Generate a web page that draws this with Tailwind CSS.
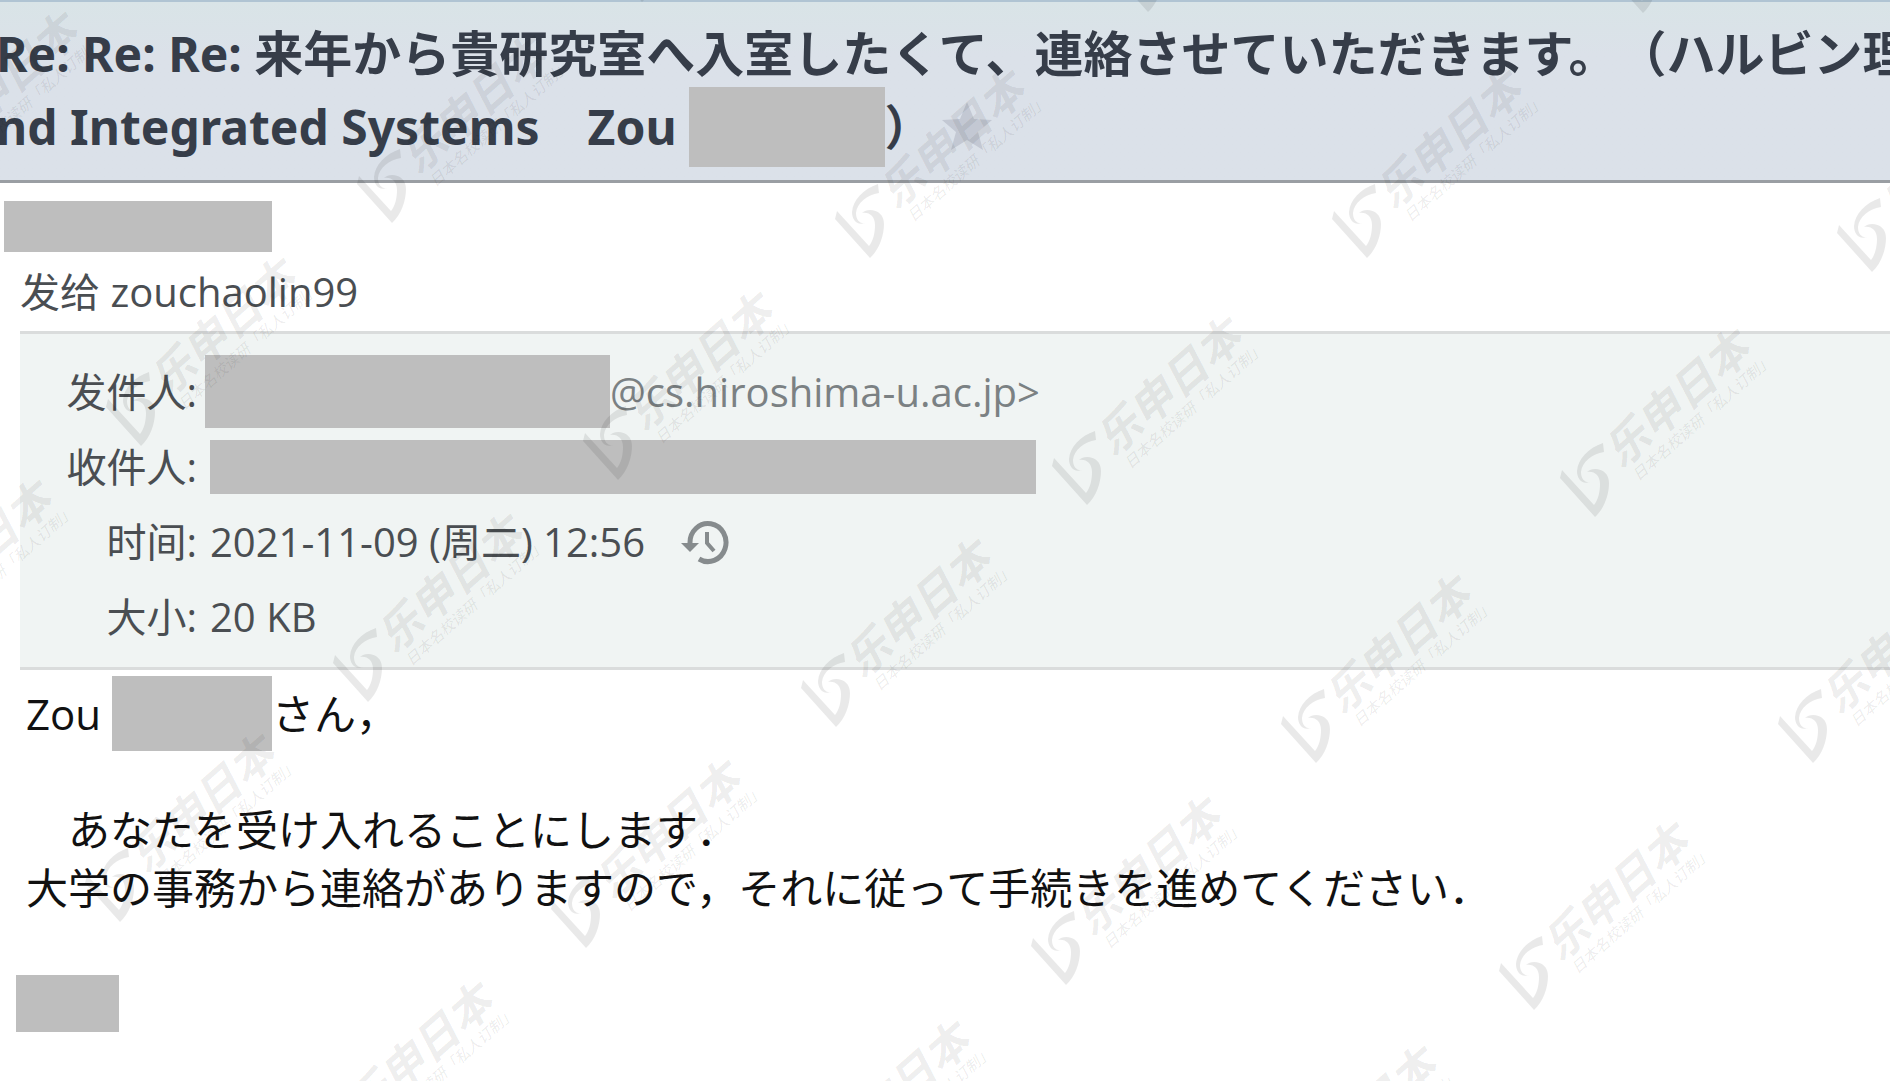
<!DOCTYPE html>
<html lang="ja">
<head>
  <meta charset="UTF-8" />
  <meta name="viewport" content="width=device-width, initial-scale=1.0"/>
  <title>Re: Re: Re: 来年から貴研究室へ入室したくて</title>
  <script src="https://cdn.jsdelivr.net/npm/@tailwindcss/browser@4"></script>
</head>
<body class="relative min-h-screen overflow-hidden bg-white text-[#4a4e52] font-['Open_Sans','Noto_Sans_CJK_SC',sans-serif] [text-spacing-trim:space-all]">

  <!-- Subject -->
  <header class="border-t-2 border-t-[#b0c4d3] border-b-3 border-b-[#9a9ea3] bg-linear-to-b from-[#d9e4e7] to-[#dbe1e9] to-30% pt-[14px] pb-4 overflow-hidden">
    <h1 class="-ml-1 whitespace-nowrap text-[48px] leading-[74px] font-bold text-[#363d49] font-['Noto_Sans','Noto_Sans_CJK_JP',sans-serif]">
      <span class="block h-[74px]">Re: Re: Re: <span class="text-[49px]">来年から貴研究室へ入室したくて、連絡させていただきます。（ハルビン理</span></span>
      <span class="flex h-[74px] items-center">
        <span>nd Integrated Systems　Zou</span>
        <span class="ml-3 h-20 w-[196px] bg-[#bebebe]"></span>
        <span class="w-12">）</span>
        <button type="button" aria-label="星标" class="ml-2">
          <svg class="size-13" viewBox="0 0 52 52" fill="#c3c8d3"><path d="M26 1l7 17 18 1-14 12 5 18-16-10-16 10 5-18L1 19l18-1z"/></svg>
        </button>
      </span>
    </h1>
  </header>

  <!-- Sender -->
  <section class="pt-[18px]">
    <div class="ml-1 h-[51px] w-[268px] bg-[#bebebe]"></div>
    <p class="pt-3 pl-5 text-[40px] leading-[56px]">发给 zouchaolin99</p>
  </section>

  <!-- Message details -->
  <section class="mt-[11px] ml-5 border-y-3 border-[#dadcdc] bg-[#f0f4f3] pt-5 pb-[13px] text-[40px]">
    <dl>
      <div class="flex h-[75px] items-center">
        <dt class="w-[177px] text-right">发件人:</dt>
        <dd class="flex items-center pl-2 text-[#7b8183]">
          <span class="h-[73px] w-[405px] bg-[#bebebe]"></span>@cs.hiroshima-u.ac.jp&gt;
        </dd>
      </div>
      <div class="flex h-[75px] items-center">
        <dt class="w-[177px] text-right">收件人:</dt>
        <dd class="pl-[13px]"><div class="h-[54px] w-[826px] bg-[#bebebe]"></div></dd>
      </div>
      <div class="flex h-[75px] items-center">
        <dt class="w-[177px] text-right">时间:</dt>
        <dd class="flex items-center gap-9 pl-[13px]">
          2021-11-09 (周二) 12:56
          <button type="button" aria-label="历史">
            <svg class="size-12" viewBox="0 0 48 48" fill="none" stroke="#868b8d" stroke-width="5">
              <path d="M9 25A18 19 0 1 1 18 41" />
              <path d="M26 14v11l7 8" stroke-width="4" />
              <path d="M0 25h18l-9 9z" fill="#868b8d" stroke="none" />
            </svg>
          </button>
        </dd>
      </div>
      <div class="flex h-[75px] items-center">
        <dt class="w-[177px] text-right">大小:</dt>
        <dd class="pl-[13px]">20 KB</dd>
      </div>
    </dl>
  </section>

  <!-- Body -->
  <main class="pt-[6px] pl-[26px] text-[42px] leading-[58px] text-[#111] font-['Open_Sans','Noto_Sans_CJK_JP',sans-serif]">
    <p class="flex h-[75px] items-center">
      <span>Zou</span>
      <span class="ml-[11px] h-[75px] w-[160px] bg-[#bebebe]"></span>
      <span>さん，</span>
    </p>
    <p class="pt-[50px] whitespace-nowrap">　あなたを受け入れることにします．<br>大学の事務から連絡がありますので，それに従って手続きを進めてください．</p>
    <div class="mt-[58px] -ml-[10px] h-[57px] w-[103px] bg-[#bebebe]"></div>
  </main>

  <!-- Watermark -->
  <svg class="pointer-events-none absolute top-0 left-0 h-full w-full font-['Noto_Sans_CJK_SC',sans-serif] italic" fill="#000" fill-opacity="0.085" aria-hidden="true">
    <defs>
      <g id="mark">
        <path d="M-33-47l-2 8L0 0C9-8 14-22 14-34C14-43 8-48 0-48C-3-48-6-47-8-45C0-46 5-41 5-33C5-25 3-17-1-12z"/>
        <path d="M8-74l1 9C-3-63-13-55-14-45C-14-38-10-34-5-35C-13-32-18-38-18-46C-17-58-7-69 8-74z"/>
        <g transform="rotate(-41.5)">
          <text x="51" y="-18" font-size="44" font-weight="700">乐申日本</text>
          <text x="56" y="2" font-size="15">日本名校读研「私人订制」</text>
        </g>
      </g>
    </defs>
    <use href="#mark" x="642" y="2"/>
    <use href="#mark" x="1148" y="12"/>
    <use href="#mark" x="1643" y="13"/>
    <use href="#mark" x="-77" y="200"/>
    <use href="#mark" x="392" y="223"/>
    <use href="#mark" x="870" y="258"/>
    <use href="#mark" x="1367" y="258"/>
    <use href="#mark" x="1872" y="272"/>
    <use href="#mark" x="141" y="446"/>
    <use href="#mark" x="618" y="480"/>
    <use href="#mark" x="1087" y="505"/>
    <use href="#mark" x="1595" y="517"/>
    <use href="#mark" x="-103" y="668"/>
    <use href="#mark" x="368" y="702"/>
    <use href="#mark" x="836" y="727"/>
    <use href="#mark" x="1316" y="763"/>
    <use href="#mark" x="1813" y="763"/>
    <use href="#mark" x="120" y="922"/>
    <use href="#mark" x="586" y="948"/>
    <use href="#mark" x="1066" y="985"/>
    <use href="#mark" x="1534" y="1010"/>
    <use href="#mark" x="338" y="1170"/>
    <use href="#mark" x="815" y="1209"/>
    <use href="#mark" x="1282" y="1234"/>
  </svg>
</body>
</html>
